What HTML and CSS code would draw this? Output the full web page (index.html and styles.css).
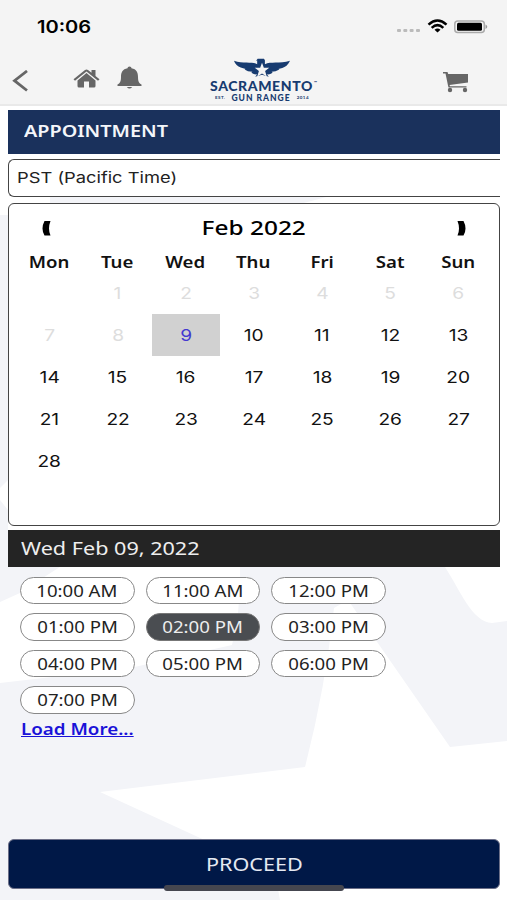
FILE: index.html
```html
<!DOCTYPE html>
<html lang="en">
<head>
<meta charset="utf-8">
<title>Appointment</title>
<link rel="stylesheet" href="styles.css">
</head>
<body>
<div class="app">
  <svg class="backdrop" viewBox="0 0 507 900" aria-hidden="true">
    <path fill="#f3f4f8" d="M0 215H8V480L0 488ZM0 500L8 510V567H60L52 572L20 593L0 602ZM0 683L130 668L232 645Q241 610 240 567H445C460 590 472 622 492 623L507 621V900H0Z"/>
    <path fill="#fff" d="M100 792L305 767Q325 690 334 608L348 600L450 747L507 741V900H280L275 872L198 837Z"/>
    <path fill="#f3f4f8" d="M50 196H330L300 204H50Z"/>
  </svg>
  <header class="top">
    <div class="status">
      <span class="clock"><span class="fit">10:06</span></span>
      <svg class="signals" viewBox="0 0 92 20" aria-hidden="true">
        <g fill="#bbb"><rect x="1" y="12" width="4" height="3" rx="1"/><rect x="7.3" y="12" width="4" height="3" rx="1"/><rect x="13.6" y="12" width="4" height="3" rx="1"/><rect x="20" y="12" width="4" height="3" rx="1"/></g>
        <g fill="none" stroke="#000" stroke-width="2.5"><path d="M32.500 7.600Q41.500-.6 50.500 7.600"/><path d="M35.700 10.900Q41.500 5.400 47.300 10.900"/></g>
        <path d="M38.500 12.700Q41.500 10.500 44.500 12.700L41.500 15.500Z"/>
        <rect x="58.8" y="4" width="29.5" height="11.5" rx="3" fill="#f4f4f4" stroke="#aaa" stroke-width="1.5"/>
        <rect x="61" y="5.8" width="25" height="8" rx="1.5"/><path fill="#999" d="M89.500 7.500Q93 9.700 89.500 12Z"/>
      </svg>
    </div>
    <nav class="nav">
      <svg class="back" viewBox="0 0 16 22"><path d="M15 1L2.500 10.700L15 20.500" fill="none" stroke="#666" stroke-width="2.800"/></svg>
      <svg class="home" viewBox="0 0 27 20" fill="#666"><path d="M13.500 4L4.500 11.500V17Q4.500 18.500 6 18.500H11V12.500H16V18.500H21Q22.500 18.500 22.500 17V11.500Z"/><path d="M.5 10.200L12 .9Q13.500 0 15 .9L18.500 3.700V1H22.500V7L26.500 10.200L25 11.800L13.500 2.600L2 11.800Z"/></svg>
      <svg class="bell" viewBox="0 0 25 23" fill="#666"><path d="M10.500 2.300Q10.500 .5 12.500 .5T14.500 2.300C19.500 3.200 21 6.500 21 11C21 15.500 22 17.500 24.500 18.500V20H.5V18.500C3 17.500 4 15.500 4 11C4 6.500 5.500 3.200 10.500 2.300Z"/><path d="M9.800 21H15.200Q12.500 24 9.800 21Z"/></svg>
      <div class="logo">
        <svg class="eagle" viewBox="0 0 60 20" aria-hidden="true"><path fill="#173b70" d="M1 2.500C11 6 20 3 25 6V2L23.500 3L25.500 .5H32L33 2V6C39 3 48 6 59 2.500C57 7 54 9 51 10L47 11L48 11.500Q44 14 40 14L41 15Q38 17 35 16.500L37 19L30 17L23 19L25 16.500Q22 17 19 15L20 14Q15 14 12 11.500L13 11L8 9.500C5 8.500 2 6 1 2.500Z"/><path fill="#f4f4f4" d="M30 4.500L31.900 9.700H37.500L33.200 13L35 19L30 15.600L25 19L26.800 13L22.500 9.700H28.100Z"/></svg>
        <div class="brand"><span>SACRAMENTO</span><small>™</small></div>
        <div class="sub"><small>EST.</small><b>GUN RANGE</b><small>2014</small></div>
      </div>
      <svg class="cart" viewBox="0 0 26 21" fill="#666"><path d="M0 0H4.500L5.200 2H25V10.500L6.500 13L7 14.300H23.500V15.600H5.500L5 13.500L2.500 1.500H0Z"/><circle cx="7" cy="18" r="2.2"/><circle cx="22" cy="18" r="2.2"/></svg>
    </nav>
  </header>
  <main class="content">
    <h1 class="title"><span class="fit">APPOINTMENT</span></h1>
    <div class="zone"><span class="fit">PST (Pacific Time)</span></div>
    <section class="calendar">
      <div class="month"><svg viewBox="0 0 9 15"><path d="M2.500 0H8.500Q5.500 7.500 8.500 14.500H2.500Q-1.500 7.500 2.500 0Z"/></svg><h2><span class="fit">Feb 2022</span></h2><svg viewBox="0 0 9 15"><path d="M6.500 0H.5Q3.500 7.500 .5 14.500H6.500Q10.500 7.500 6.500 0Z"/></svg></div>
      <div class="week"><span class="fit">Mon</span><span class="fit">Tue</span><span class="fit">Wed</span><span class="fit">Thu</span><span class="fit">Fri</span><span class="fit">Sat</span><span class="fit">Sun</span></div>
      <div class="days">
        <i></i><i class="off"><b>1</b></i><i class="off"><b>2</b></i><i class="off"><b>3</b></i><i class="off"><b>4</b></i><i class="off"><b>5</b></i><i class="off"><b>6</b></i>
        <i class="off"><b>7</b></i><i class="off"><b>8</b></i><i class="on"><b>9</b></i><i><b>10</b></i><i><b>11</b></i><i><b>12</b></i><i><b>13</b></i>
        <i><b>14</b></i><i><b>15</b></i><i><b>16</b></i><i><b>17</b></i><i><b>18</b></i><i><b>19</b></i><i><b>20</b></i>
        <i><b>21</b></i><i><b>22</b></i><i><b>23</b></i><i><b>24</b></i><i><b>25</b></i><i><b>26</b></i><i><b>27</b></i>
        <i><b>28</b></i>
      </div>
    </section>
    <div class="date"><span class="fit">Wed Feb 09, 2022</span></div>
    <div class="slots">
      <button><span class="fit">10:00 AM</span></button><button><span class="fit">11:00 AM</span></button><button><span class="fit">12:00 PM</span></button>
      <button><span class="fit">01:00 PM</span></button><button class="picked"><span class="fit">02:00 PM</span></button><button><span class="fit">03:00 PM</span></button>
      <button><span class="fit">04:00 PM</span></button><button><span class="fit">05:00 PM</span></button><button><span class="fit">06:00 PM</span></button>
      <button><span class="fit">07:00 PM</span></button>
    </div>
    <a class="more fit" href="#">Load More...</a>
  </main>
  <button class="proceed"><span class="fit">PROCEED</span></button>
  <div class="indicator"></div>
</div>
</body>
</html>
```

FILE: styles.css
```css
* { box-sizing: border-box; margin: 0; padding: 0; }
body { background: #fff; font-family: "Noto Sans", sans-serif; color: #111; }
button { font-family: inherit; color: inherit; }
.app { position: relative; width: 507px; height: 900px; overflow: hidden; display: flex; flex-direction: column; isolation: isolate; }
.backdrop { position: absolute; inset: 0; z-index: -1; }
.fit { display: inline-block; white-space: nowrap; transform: scaleX(1.2); transform-origin: center; }

.top { height: 106px; background: #f4f4f4; border-bottom: 2px solid #e9e9e9; }
.status { height: 53px; display: flex; justify-content: space-between; padding: 17px 19px 0 37px; }
.clock { font: 600 17px/20px Inter, sans-serif; color: #000; }
.clock .fit { transform-origin: left; transform: scaleX(1.18); }
.signals { width: 92px; height: 20px; }
.nav { height: 51px; display: flex; align-items: flex-start; padding-left: 12px; }
.nav svg { flex: none; }
.back { width: 16px; height: 22px; margin-top: 17px; }
.home { width: 27px; height: 20px; margin: 16px 0 0 45px; }
.bell { width: 25px; height: 23px; margin: 13px 0 0 17px; }
.logo { width: 120px; height: 50px; margin: 5px 0 0 60px; display: flex; flex-direction: column; align-items: center; color: #173b70; font-family: Lato, sans-serif; }
.logo .eagle { width: 58px; height: 20px; }
.brand { font-weight: 900; font-size: 14px; line-height: 14px; height: 14px; display: flex; margin: 1px 0 0 3px; letter-spacing: .6px; }
.brand small { font-size: 4px; line-height: 8px; margin-left: 1px; letter-spacing: 0; }
.sub { display: flex; gap: 6px; align-items: center; font-size: 8.5px; line-height: 8.5px; letter-spacing: 1px; margin-top: 1px; }
.sub b { font-weight: 900; }
.sub small { font-size: 4.5px; font-weight: 700; letter-spacing: .5px; }
.cart { width: 26px; height: 21px; margin: 19px 0 0 121px; }

.content { padding: 3.500px 7px 0 8px; }
.title { height: 44px; background: #1a315c; color: #f4f6fa; font-size: 16.500px; font-weight: 600; line-height: 42px; padding-left: 16px; }
.title .fit, .zone .fit, .date .fit, .more { transform-origin: left; }
.zone { margin-top: 5px; height: 38.500px; border: 1.300px solid #444; border-right: 0; border-radius: 6px 0 0 6px; background: #fff; padding-left: 8px; font: 15px/36px Inter, sans-serif; color: #222; }
.zone .fit { transform: scaleX(1.22); }
.calendar { margin-top: 6px; height: 322.500px; border: 1.300px solid #444; border-radius: 6px; background: #fff; padding: 0 6.500px; }
.month { height: 48px; display: flex; justify-content: space-between; align-items: center; padding: 0 27px 0 26px; }
.month svg { width: 9px; height: 15px; }
.month h2 { font-size: 20px; font-weight: 500; line-height: 28px; color: #000; }
.month .fit { transform: scaleX(1.22); }
.week { display: grid; grid-template-columns: repeat(7, 1fr); height: 20px; font-size: 15.500px; font-weight: 600; line-height: 20px; text-align: center; margin: 0 0 0 -1px; }
.days { display: grid; grid-template-columns: repeat(7, 1fr); grid-auto-rows: 42px; font-family: Inter, sans-serif; font-size: 16.500px; }
.days i { display: flex; align-items: center; justify-content: center; font-style: normal; }
.days b { font-weight: 400; transform: scaleX(1.16); }
.days .off { color: #ddd; }
.days .on { background: #d1d1d1; color: #4438d0; }
.date { margin-top: 4.500px; height: 37px; background: #242424; color: #eee; padding-left: 13px; font-size: 18px; line-height: 37px; }
.slots { display: grid; grid-template-columns: repeat(3, 114.500px); grid-auto-rows: 27.500px; gap: 9px 11px; padding: 9.500px 0 0 12px; }
.slots button { border: 1.300px solid #888; border-radius: 14px; background: #fff; font-size: 15.500px; line-height: 24px; padding-top: 1px; color: #222; }
.slots .picked { background: #4a4d51; color: #eee; border-color: #777; }
.more { margin-left: 13px; font-size: 15.500px; line-height: 21px; margin-top: 5.500px; font-weight: 600; color: #1a12d8; }
.more.fit { transform: scaleX(1.21); }
.proceed { position: absolute; left: 8px; top: 839px; width: 492px; height: 50px; border: 1px solid #6c6f88; border-radius: 6px; background: #001847; color: #e5e9f2; font-size: 18px; line-height: 46px; }
.indicator { position: absolute; left: 164px; top: 885px; width: 180px; height: 6px; border-radius: 3px; background: #45464f; }
```
